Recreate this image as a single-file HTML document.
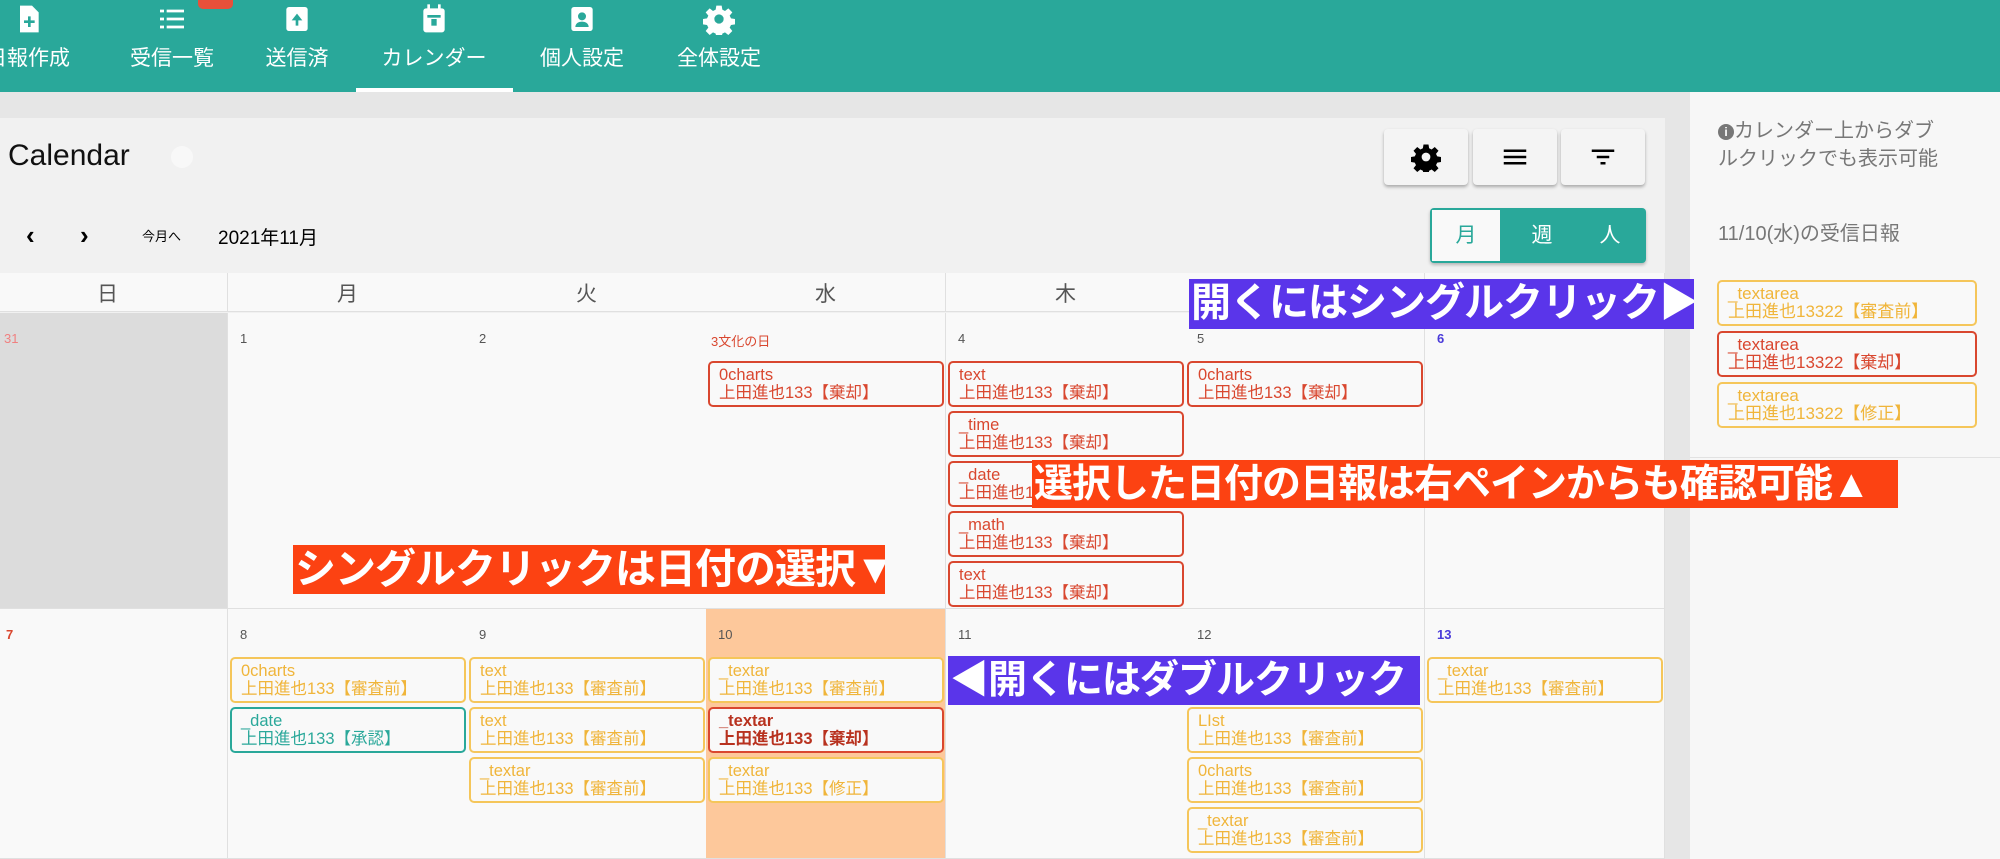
<!DOCTYPE html>
<html><head><meta charset="utf-8"><style>
*{box-sizing:border-box;margin:0;padding:0}
body{width:2000px;height:859px;overflow:hidden;position:relative;background:#e6e6e6;font-family:"Liberation Sans","Noto Sans CJK JP",sans-serif}
.a{position:absolute}
.hdr{left:0;top:0;width:2000px;height:92px;background:#29a89a}
.nav{position:absolute;top:0;width:130px;height:92px;color:#fff;text-align:center}
.nav .lb{position:absolute;top:42px;left:0;width:100%;font-size:21px;white-space:nowrap}
.nav svg{position:absolute;top:3px;left:50%;margin-left:-16px}
.main{left:0;top:118px;width:1665px;height:741px;background:#f1f1f1}
.col{position:absolute;width:240px;border-right:1px solid #e0e0e0}
.dh{top:273px;height:39px;background:#f9f9f9;font-size:21px;color:#555;text-align:center;line-height:44px;border-bottom:1px solid #e0e0e0}
.cell{background:#f9f9f9;border-bottom:1px solid #e0e0e0}
.dn{position:absolute;font-size:13px;color:#555;left:12px;top:18px}
.ev{position:absolute;height:46px;border:2px solid;border-radius:5px;font-size:16.5px;line-height:18px;padding:3px 9px;white-space:nowrap;overflow:hidden;background:#f9f9f9}
.r{border-color:#d9472f;color:#d9472f}
.y{border-color:#f5c65a;color:#f0b53a}
.t{border-color:#2aa89a;color:#2aa89a}
.ov{position:absolute;color:#fff;font-weight:bold;font-size:39px;line-height:49px;white-space:nowrap;overflow:hidden;padding-left:2px;letter-spacing:-1px}
.pu{background:#5a35ea}.rd{background:#fc4212}
.btn{position:absolute;top:129px;width:84px;height:56px;background:#f4f4f4;border-radius:4px;box-shadow:0 2px 3px rgba(0,0,0,.3)}
</style></head><body>
<div class="a hdr"></div>
<div class="nav" style="left:-37px"><svg width="32" height="32" viewBox="0 0 24 24"><path fill="#fff" d="M6 2h9l5 5v15H6z"/><path stroke="#29a89a" stroke-width="2" d="M13 10v8M9 14h8"/></svg><div class="lb">日報作成</div></div>
<div class="nav" style="left:107px"><svg width="32" height="32" viewBox="0 0 24 24"><path fill="#fff" d="M3 5h3v2H3zM8 5h13v2H8zM3 11h3v2H3zM8 11h13v2H8zM3 17h3v2H3zM8 17h13v2H8z"/></svg><div class="lb">受信一覧</div></div>
<div class="a" style="left:198px;top:0;width:35px;height:9px;background:#e8503a;border-radius:0 0 5px 5px"></div>
<div class="nav" style="left:232px"><svg width="32" height="32" viewBox="0 0 24 24"><rect x="4" y="3" width="16" height="18" rx="2" fill="#fff"/><path fill="#29a89a" d="M12 8l-4 5h3v4h2v-4h3z"/></svg><div class="lb">送信済</div></div>
<div class="nav" style="left:369px"><svg width="32" height="32" viewBox="0 0 24 24"><rect x="4" y="4" width="16" height="18" rx="2" fill="#fff"/><rect x="7" y="1" width="2" height="5" fill="#fff"/><rect x="15" y="1" width="2" height="5" fill="#fff"/><rect x="7" y="9" width="10" height="2" fill="#29a89a"/><rect x="10" y="12" width="4" height="5" fill="#29a89a"/></svg><div class="lb">カレンダー</div></div>
<div class="a" style="left:356px;top:88px;width:157px;height:4px;background:#fff"></div>
<div class="nav" style="left:517px"><svg width="32" height="32" viewBox="0 0 24 24"><rect x="4" y="3" width="16" height="18" rx="2" fill="#fff"/><circle cx="12" cy="10" r="3" fill="#29a89a"/><path fill="#29a89a" d="M7 18c0-3 3-4 5-4s5 1 5 4z"/></svg><div class="lb">個人設定</div></div>
<div class="nav" style="left:654px"><svg width="32" height="32" viewBox="0 0 24 24"><path fill="#fff" d="M10 2h4l.5 3 2 1 2.5-2 3 3-2 2.5 1 2 3 .5v4l-3 .5-1 2 2 2.5-3 3-2.5-2-2 1-.5 3h-4l-.5-3-2-1-2.5 2-3-3 2-2.5-1-2-3-.5v-4l3-.5 1-2-2-2.5 3-3 2.5 2 2-1z"/><circle cx="12" cy="12" r="3.5" fill="#29a89a"/></svg><div class="lb">全体設定</div></div>

<div class="a main"></div>
<div class="a" style="left:1690px;top:92px;width:310px;height:767px;background:#f7f7f7"></div>
<div class="a" style="left:1690px;top:457px;width:310px;height:1px;background:#e2e2e2"></div>

<div class="a" style="left:8px;top:139px;font-size:30px;color:#111">Calendar</div>
<div class="a" style="left:171px;top:146px;width:22px;height:22px;border-radius:50%;background:#f8f8f8"></div>

<div class="btn" style="left:1384px"><svg class="a" style="left:27px;top:13px" width="30" height="30" viewBox="0 0 24 24"><path fill="#000" d="M10 2h4l.5 3 2 1 2.5-2 3 3-2 2.5 1 2 3 .5v4l-3 .5-1 2 2 2.5-3 3-2.5-2-2 1-.5 3h-4l-.5-3-2-1-2.5 2-3-3 2-2.5-1-2-3-.5v-4l3-.5 1-2-2-2.5 3-3 2.5 2 2-1z"/><circle cx="12" cy="12" r="3.5" fill="#f4f4f4"/></svg></div>
<div class="btn" style="left:1473px"><svg class="a" style="left:27px;top:13px" width="30" height="30" viewBox="0 0 24 24"><path fill="#000" d="M3 6h18v2H3zM3 11h18v2H3zM3 16h18v2H3z"/></svg></div>
<div class="btn" style="left:1561px"><svg class="a" style="left:27px;top:13px" width="30" height="30" viewBox="0 0 24 24"><path fill="#000" d="M3 6h18v2H3zM7 11h10v2H7zM10 16h4v2h-4z"/></svg></div>

<div class="a" style="left:26px;top:220px;font-size:26px;font-weight:bold">‹</div>
<div class="a" style="left:80px;top:220px;font-size:26px;font-weight:bold">›</div>
<div class="a" style="left:142px;top:226px;font-size:13px">今月へ</div>
<div class="a" style="left:218px;top:223px;font-size:19px">2021年11月</div>

<div class="a" style="left:1430px;top:208px;width:216px;height:55px;background:#29a89a;border-radius:4px;box-shadow:0 2px 3px rgba(0,0,0,.25)"></div>
<div class="a" style="left:1432px;top:210px;width:68px;height:51px;background:#f9f9f9;color:#29a89a;font-size:21px;text-align:center;line-height:51px">月</div>
<div class="a" style="left:1512px;top:208px;width:60px;height:55px;color:#fff;font-size:21px;text-align:center;line-height:55px">週</div>
<div class="a" style="left:1580px;top:208px;width:60px;height:55px;color:#fff;font-size:21px;text-align:center;line-height:55px">人</div>

<div class="col dh" style="left:-12px">日</div>
<div class="col dh" style="left:228px">月</div>
<div class="col dh" style="left:467px">火</div>
<div class="col dh" style="left:706px">水</div>
<div class="col dh" style="left:946px">木</div>
<div class="col dh" style="left:1185px">金</div>
<div class="col dh" style="left:1425px">土</div>

<div class="col cell" style="left:-12px;top:313px;height:296px;background:#dcdcdc"><div class="dn" style="left:16px;color:#f08080">31</div></div>
<div class="col cell" style="left:228px;top:313px;height:296px"><div class="dn">1</div></div>
<div class="col cell" style="left:467px;top:313px;height:296px"><div class="dn">2</div></div>
<div class="col cell" style="left:706px;top:313px;height:296px"><div class="dn" style="color:#d9472f;left:5px">3文化の日</div></div>
<div class="col cell" style="left:946px;top:313px;height:296px"><div class="dn">4</div></div>
<div class="col cell" style="left:1185px;top:313px;height:296px"><div class="dn">5</div></div>
<div class="col cell" style="left:1425px;top:313px;height:296px"><div class="dn" style="color:#4a3ad9;font-weight:bold">6</div></div>
<div class="col cell" style="left:-12px;top:609px;height:250px"><div class="dn" style="left:18px;color:#d9472f;font-weight:bold">7</div></div>
<div class="col cell" style="left:228px;top:609px;height:250px"><div class="dn">8</div></div>
<div class="col cell" style="left:467px;top:609px;height:250px"><div class="dn">9</div></div>
<div class="col cell" style="left:706px;top:609px;height:250px;background:#fdc89b"><div class="dn">10</div></div>
<div class="col cell" style="left:946px;top:609px;height:250px"><div class="dn">11</div></div>
<div class="col cell" style="left:1185px;top:609px;height:250px"><div class="dn">12</div></div>
<div class="col cell" style="left:1425px;top:609px;height:250px"><div class="dn" style="color:#4a3ad9;font-weight:bold">13</div></div>

<div class="ev r" style="left:708px;top:361px;width:236px">0charts<br>上田進也133【棄却】</div>
<div class="ev r" style="left:948px;top:361px;width:236px">text<br>上田進也133【棄却】</div>
<div class="ev r" style="left:948px;top:411px;width:236px">_time<br>上田進也133【棄却】</div>
<div class="ev r" style="left:948px;top:461px;width:236px">_date<br>上田進也133【棄却】</div>
<div class="ev r" style="left:948px;top:511px;width:236px">_math<br>上田進也133【棄却】</div>
<div class="ev r" style="left:948px;top:561px;width:236px">text<br>上田進也133【棄却】</div>
<div class="ev r" style="left:1187px;top:361px;width:236px">0charts<br>上田進也133【棄却】</div>
<div class="ev y" style="left:230px;top:657px;width:236px">0charts<br>上田進也133【審査前】</div>
<div class="ev t" style="left:230px;top:707px;width:236px">_date<br>上田進也133【承認】</div>
<div class="ev y" style="left:469px;top:657px;width:236px">text<br>上田進也133【審査前】</div>
<div class="ev y" style="left:469px;top:707px;width:236px">text<br>上田進也133【審査前】</div>
<div class="ev y" style="left:469px;top:757px;width:236px">_textar<br>上田進也133【審査前】</div>
<div class="ev y" style="left:708px;top:657px;width:236px">_textar<br>上田進也133【審査前】</div>
<div class="ev r" style="left:708px;top:707px;width:236px;font-weight:bold;color:#b8321f">_textar<br>上田進也133【棄却】</div>
<div class="ev y" style="left:708px;top:757px;width:236px">_textar<br>上田進也133【修正】</div>
<div class="ev y" style="left:1187px;top:707px;width:236px">LIst<br>上田進也133【審査前】</div>
<div class="ev y" style="left:1187px;top:757px;width:236px">0charts<br>上田進也133【審査前】</div>
<div class="ev y" style="left:1187px;top:807px;width:236px">_textar<br>上田進也133【審査前】</div>
<div class="ev y" style="left:1427px;top:657px;width:236px">_textar<br>上田進也133【審査前】</div>

<div class="a" style="left:1718px;top:117px;width:228px;font-size:20px;line-height:28px;color:#777"><span style="display:inline-block;width:16px;height:16px;border-radius:50%;background:#777;color:#fff;font-size:12px;text-align:center;line-height:16px;font-weight:bold;vertical-align:1px">i</span>カレンダー上からダブルクリックでも表示可能</div>
<div class="a" style="left:1718px;top:217px;font-size:20px;color:#777">11/10(水)の受信日報</div>
<div class="ev y" style="left:1717px;top:280px;width:260px;height:46px;font-size:17px">_textarea<br>上田進也13322【審査前】</div>
<div class="ev r" style="left:1717px;top:331px;width:260px;height:46px;font-size:17px">_textarea<br>上田進也13322【棄却】</div>
<div class="ev y" style="left:1717px;top:382px;width:260px;height:46px;font-size:17px">_textarea<br>上田進也13322【修正】</div>

<div class="ov pu" style="left:1189px;top:279px;width:505px;height:50px;font-size:40px">開くにはシングルクリック▶</div>
<div class="ov rd" style="left:1032px;top:460px;width:866px;height:48px;font-size:39px">選択した日付の日報は右ペインからも確認可能▲</div>
<div class="ov rd" style="left:293px;top:545px;width:592px;height:49px;font-size:41px">シングルクリックは日付の選択▼</div>
<div class="ov pu" style="left:948px;top:656px;width:472px;height:49px;font-size:39px">◀開くにはダブルクリック</div>
</body></html>
